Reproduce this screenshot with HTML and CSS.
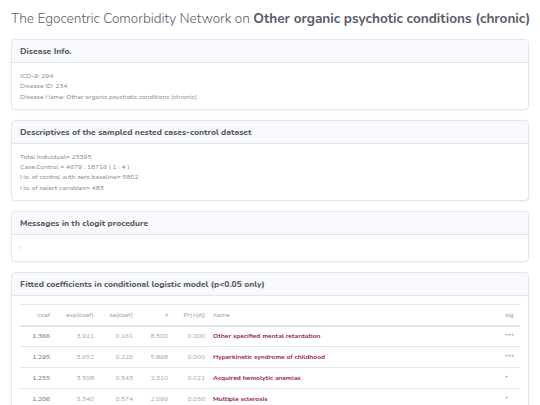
FILE: index.html
```html
<!DOCTYPE html>
<html lang="en">
	<head>
		<meta charset="UTF-8">
		<meta name="viewport" content="width=device-width, initial-scale=1.0">
		<title>Egocentric Comorbidity Network</title>
		<link rel="stylesheet" href="styles.css">
	</head>
	<body>
		<div class="page">
			<h1 class="title">The Egocentric Comorbidity Network on <b>Other organic psychotic conditions (chronic)</b></h1>

			<!--Disease info-->
			<div class="card">
				<div class="card-head">Disease Info.</div>
				<div class="card-body">
					<p>ICD-9: 294</p>
					<p>Disease ID: 234</p>
					<p>Disease Name: Other organic psychotic conditions (chronic)</p>
				</div>
			</div>

			<!--Dataset descriptives-->
			<div class="card">
				<div class="card-head">Descriptives of the sampled nested cases-control dataset</div>
				<div class="card-body">
					<p>Total individual= 23395</p>
					<p>Case:Control = 4679 : 18716 ( 1 : 4 )</p>
					<p>No. of control with zero baseline= 5802</p>
					<p>No. of select variables= 483</p>
				</div>
			</div>

			<!--clogit messages-->
			<div class="card">
				<div class="card-head">Messages in th clogit procedure</div>
				<div class="card-body msg">
					<p>:</p>
				</div>
			</div>

			<!--Coefficient table-->
			<div class="card">
				<div class="card-head">Fitted coefficients in conditional logistic model (p&lt;0.05 only)</div>
				<div class="card-body">
					<table class="coef-table">
						<colgroup>
							<col class="c-coef">
							<col class="c-exp">
							<col class="c-se">
							<col class="c-z">
							<col class="c-pr">
							<col>
							<col class="c-sig">
						</colgroup>
						<thead>
							<tr>
								<th class="num">coef</th>
								<th class="num">exp(coef)</th>
								<th class="num">se(coef)</th>
								<th class="num">z</th>
								<th class="num">Pr(&gt;|z|)</th>
								<th>name</th>
								<th>sig</th>
							</tr>
						</thead>
						<tbody>
							<tr>
								<td class="num strong">1.366</td><td class="num">3.921</td><td class="num">0.161</td><td class="num">8.500</td><td class="num">0.000</td>
								<td><a href="#">Other specified mental retardation</a></td><td>***</td>
							</tr>
							<tr>
								<td class="num strong">1.295</td><td class="num">3.652</td><td class="num">0.220</td><td class="num">5.898</td><td class="num">0.000</td>
								<td><a href="#">Hyperkinetic syndrome of childhood</a></td><td>***</td>
							</tr>
							<tr>
								<td class="num strong">1.255</td><td class="num">3.508</td><td class="num">0.543</td><td class="num">2.310</td><td class="num">0.021</td>
								<td><a href="#">Acquired hemolytic anemias</a></td><td>*</td>
							</tr>
							<tr>
								<td class="num strong">1.206</td><td class="num">3.340</td><td class="num">0.574</td><td class="num">2.099</td><td class="num">0.036</td>
								<td><a href="#">Multiple sclerosis</a></td><td>*</td>
							</tr>
						</tbody>
					</table>
				</div>
			</div>
		</div>
	</body>
</html>
```

FILE: styles.css
```css
* {
	box-sizing: border-box;
}

body {
	margin: 0;
	font-family: "Nunito", "Open Sans", sans-serif;
	color: #858796;
	background: #fff;
}

.page {
	padding: 10px 11px 0 11px;
}

/* Page heading */
.title {
	margin: 0 0 11px 0;
	font-size: 13.6px;
	font-weight: 300;
	line-height: 18px;
	color: #5a5c69;
	white-space: nowrap;
}

.title b {
	font-weight: 700;
}

/* Cards */
.card {
	border: 1px solid #e3e6f0;
	border-radius: 4px;
	margin-bottom: 10px;
	box-shadow: 0 1px 1px rgba(58, 59, 69, 0.05);
}

.card-head {
	padding: 6px 8px 6px 8px;
	background: #f8f9fc;
	border-bottom: 1px solid #e3e6f0;
	border-radius: 4px 4px 0 0;
	font-size: 8.5px;
	font-weight: 800;
	line-height: 10px;
	color: #5a5c69;
}

.card-body {
	padding: 8px 8px 7px 8px;
	font-size: 6.7px;
	line-height: 10.3px;
}

.card-body p {
	margin: 0;
}

.msg {
	padding: 8px 8px;
}

/* Coefficient table */
.coef-table {
	width: 100%;
	table-layout: fixed;
	border-collapse: collapse;
	font-size: 6.7px;
}

.c-coef { width: 34px; }
.c-exp { width: 44px; }
.c-se { width: 39px; }
.c-z { width: 35px; }
.c-pr { width: 37px; }
.c-sig { width: 19px; }

.coef-table th, .coef-table td {
	padding: 0 4px;
	height: 21px;
	border-top: 1px solid #e3e6f0;
	text-align: left;
	font-weight: 400;
	color: #a3a5b0;
	white-space: nowrap;
}

.coef-table thead th {
	border-bottom: 2px solid #e3e6f0;
	color: #969aa6;
}

.coef-table .num {
	text-align: right;
}

.coef-table .strong {
	color: #80828f;
	font-weight: 600;
}

.coef-table a {
	color: #9b1c3d;
	font-weight: 700;
	text-decoration: none;
}
```
